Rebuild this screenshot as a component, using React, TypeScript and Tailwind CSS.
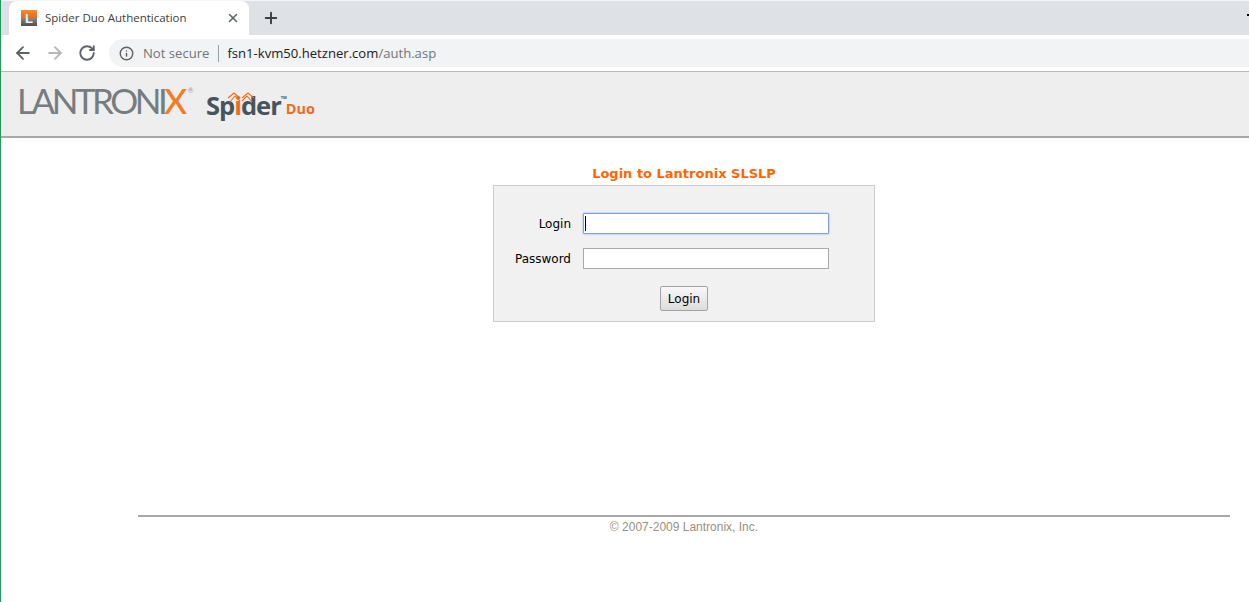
import React from 'react';
import { ArrowLeft, ArrowRight, Info, Plus, RotateCw, X } from 'lucide-react';

const TabIcon = () => (
  <div className="relative flex h-4 w-4 shrink-0 flex-col overflow-hidden">
    <div className="h-2 bg-gradient-to-b from-[#f58a32] to-[#e8681a]" />
    <div className="h-2 bg-gradient-to-b from-[#8a8a8a] to-[#4e4e4e]" />
    <span className="absolute left-[4px] top-[1px] font-['Liberation_Sans',sans-serif] text-[13px] font-bold leading-[15px] text-[#f2f2f2]">L</span>
  </div>
);

const BrowserChrome = () => (
  <div className="shrink-0">
    <div className="flex h-[35px] items-end border-t border-t-[#f4f5f6] bg-[#dee1e6] pl-[8px]">
      <div className="flex h-[34px] w-[240px] items-center rounded-t-lg bg-white pl-3 pr-[9px] font-['Open_Sans',sans-serif] text-[11.5px] text-[#3c4043]">
        <TabIcon />
        <span className="ml-2 flex-1 truncate">Spider Duo Authentication</span>
        <X className="h-[14px] w-[14px] text-[#5f6368]" strokeWidth={2.6} />
      </div>
      <div className="flex h-[34px] w-[43px] items-center justify-center">
        <Plus className="h-[18px] w-[18px] text-[#3c4043]" strokeWidth={2.6} />
      </div>
      <div className="ml-auto mb-[19px] h-[2px] w-[2px] bg-black" />
    </div>
    <div className="flex h-[37px] items-center border-b border-b-[#b8b8b8] bg-white pl-[12px]">
      <ArrowLeft className="h-[20px] w-[20px] text-[#5f6368]" strokeWidth={2.2} />
      <ArrowRight className="ml-[12px] h-[20px] w-[20px] text-[#b4b6b9]" strokeWidth={2.2} />
      <RotateCw className="ml-[13px] h-[18px] w-[18px] text-[#5f6368]" strokeWidth={2.5} />
      <div className="ml-[13px] flex h-[28px] flex-1 items-center rounded-l-full bg-[#f1f3f4] pl-[10px] font-['Open_Sans',sans-serif] text-[13.1px]">
        <Info className="h-[15px] w-[15px] text-[#5f6368]" strokeWidth={2.3} />
        <span className="ml-[9px] mt-[2px] text-[#70757a]">Not secure</span>
        <span className="ml-[9px] h-[17px] w-px bg-[#9aa0a6]" />
        <span className="ml-2 mt-[2px] text-[#202124]">fsn1-kvm50.hetzner.com<span className="text-[#70757a]">/auth.asp</span></span>
      </div>
    </div>
  </div>
);

const SpiderLegs = () => (
  <svg className="absolute left-[21px] top-[2px]" width="28" height="13" viewBox="0 0 28 13" fill="none" stroke="#f26a1b" strokeWidth="1.1">
    <path d="M1 7 L7 2 L13 7" />
    <path d="M3 11 L8 5 L13 10" />
    <path d="M27 7 L21 2 L15 7" />
    <path d="M25 11 L20 5 L15 10" />
  </svg>
);

const Logos = () => (
  <div className="flex h-[66px] shrink-0 items-start border-b-2 border-b-[#a8a8a8] bg-[#eeeeee] pl-[16px]">
    <div className="mt-[6px] flex w-[189px] items-start font-['Lato',sans-serif] text-[35px] font-normal leading-[44px] tracking-[-3.5px] text-[#767d80]">
      <span>LANTRONI</span>
      <span className="font-medium text-[#f47b20]">X</span>
      <span className="ml-[4px] mt-[8px] text-[7px] leading-[8px] tracking-normal text-[#9a9a9a]">®</span>
    </div>
    <div className="relative mt-[17px] flex items-start font-['Open_Sans',sans-serif] font-bold">
      <SpiderLegs />
      <span className="text-[25.5px] leading-[32px] tracking-[-1px] text-[#46555d]">
        Sp<span className="text-[#f26a1b]">i</span>der
      </span>
      <span className="mt-[6px] w-[5px] text-[4px] leading-[6px] text-[#46555d]">TM</span>
      <span className="mt-[10px] text-[14.5px] leading-[20px] text-[#f26a1b]">Duo</span>
    </div>
  </div>
);

const fieldClass = "h-[21px] w-[246px] bg-white px-[1px] outline-none";

const LoginForm = () => (
  <div className="flex flex-col items-center">
    <h1 className="font-['DejaVu_Sans',sans-serif] text-[13px] font-bold leading-[16px] text-[#ff6600]">Login to Lantronix SLSLP</h1>
    <div className="mt-[3px] h-[137px] w-[382px] border border-[#cccccc] bg-[#f1f1f1] pt-[27px] font-['DejaVu_Sans',sans-serif] text-[12px] text-black">
      <div className="grid grid-cols-[77px_246px] items-center gap-x-3 gap-y-[14px]">
        <label className="text-right">Login</label>
        <div className={`${fieldClass} flex items-center rounded-[1px] border border-[#7f9fe6] shadow-[0_0_2px_#7f9fe6]`}>
          <span className="h-[15px] w-px bg-black" />
        </div>
        <label className="text-right">Password</label>
        <div className={`${fieldClass} border border-[#a9a9a9]`} />
      </div>
      <div className="mt-[17px] flex justify-center">
        <button className="h-[25px] w-[48px] rounded-[2px] border border-[#a3a3a3] bg-gradient-to-b from-[#f8f8f8] to-[#dddddd] text-black">Login</button>
      </div>
    </div>
  </div>
);

export default function App() {
  return (
    <div className="flex h-[602px] w-[1249px] flex-col overflow-hidden border-l border-l-[#1a9c5a] bg-white">
      <BrowserChrome />
      <Logos />
      <main className="ml-[137px] mr-[19px] flex flex-1 flex-col">
        <div className="pt-[28px]">
          <LoginForm />
        </div>
        <footer className="mt-[193px] border-t-2 border-t-[#a8a8a8] pt-[3px] text-center font-['Liberation_Sans',sans-serif] text-[12px] leading-[14px] text-[#999080]">
          © 2007-2009 Lantronix, Inc.
        </footer>
      </main>
    </div>
  );
}
